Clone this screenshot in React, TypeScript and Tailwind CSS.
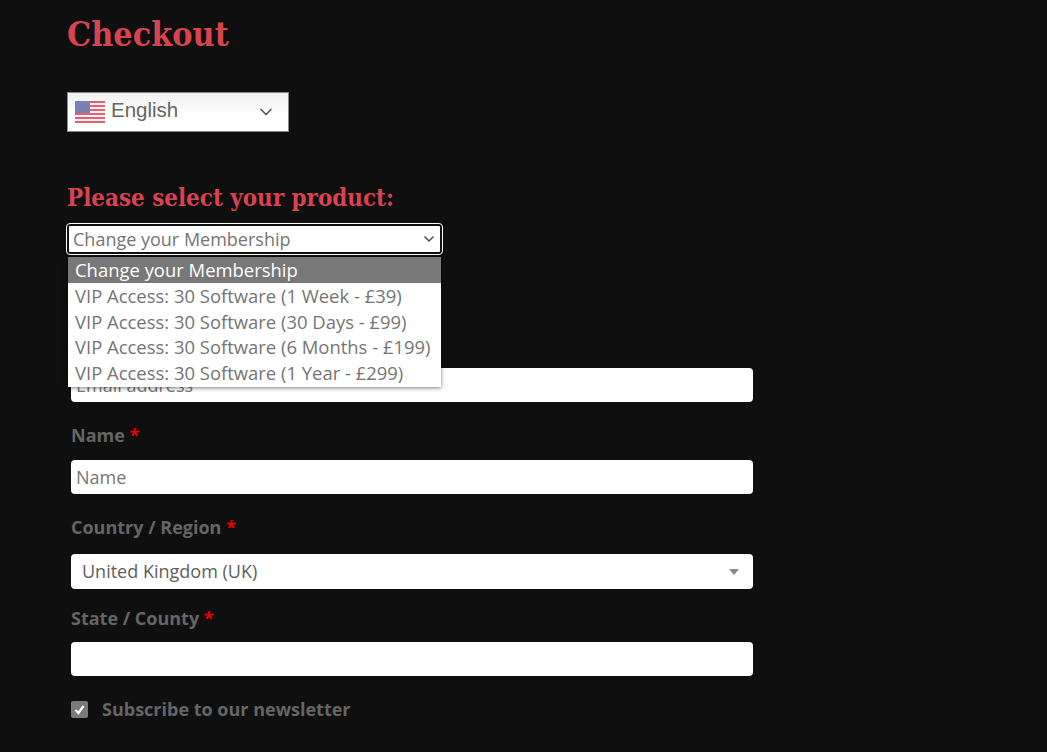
import { ChevronDown } from 'lucide-react';

const products = [
  'VIP Access: 30 Software (1 Week - £39)',
  'VIP Access: 30 Software (30 Days - £99)',
  'VIP Access: 30 Software (6 Months - £199)',
  'VIP Access: 30 Software (1 Year - £299)',
];

function UsFlag() {
  return (
    <svg width="30" height="22" viewBox="0 0 30 22" className="shrink-0 blur-[0.4px]">
      <rect width="30" height="22" fill="#f7f3f4" />
      {[0, 4, 8, 12, 16, 20].map((y) => (
        <rect key={y} y={y} width="30" height="2" fill="#e5616f" />
      ))}
      <rect width="15" height="12" fill="#7a7fb4" />
    </svg>
  );
}

function FieldLabel({ children }: { children: string }) {
  return (
    <label className="block ml-[4px] text-[18px] leading-[26px] font-bold text-[#656565]">
      {children} <span className="text-[#e60000]">*</span>
    </label>
  );
}

export default function App() {
  return (
    <div className="h-[752px] overflow-hidden bg-[#0f0f10] pl-[67px] font-['Open_Sans',sans-serif]">
      <div className="w-[686px] pt-[13px]">
        <h1 className="font-['DejaVu_Serif_Condensed','DejaVu_Serif',serif] text-[33.8px] leading-[42px] font-bold text-[#d9434f]">
          Checkout
        </h1>

        {/* Language switcher */}
        <div className="mt-[37px] flex h-[40px] w-[222px] items-center border border-[#8a8a8a] bg-gradient-to-b from-[#f1f1f1] to-white to-60% pl-[7px] pr-[12px] font-['Liberation_Sans',sans-serif] text-[20.5px] text-[#666666]">
          <UsFlag />
          <span className="ml-[6px] flex-1 leading-none mb-[4px]">English</span>
          <ChevronDown size={20} strokeWidth={2} className="text-[#555555]" />
        </div>

        <h2 className="mt-[50px] font-['DejaVu_Serif_Condensed','DejaVu_Serif',serif] text-[23.9px] leading-[32px] font-bold text-[#d9434f]">
          Please select your product:
        </h2>

        {/* Open native select */}
        <div className="relative mt-[10px] w-[375px]">
          <div className="flex h-[30px] items-center rounded-[3px] border-2 border-[#111] bg-white pl-[4px] pr-[3px] text-[18px] text-[#757575] outline outline-1 outline-white">
            <span className="flex-1 leading-none">Change your Membership</span>
            <ChevronDown size={16} strokeWidth={2.5} className="text-[#555555]" />
          </div>
          <ul className="absolute left-[1px] top-[33px] z-10 w-[373px] bg-white pb-[2px] text-[18.45px] leading-[25.5px] text-[#757575] shadow-[0_1px_4px_rgba(0,0,0,0.5)]">
            <li className="h-[26px] bg-[#787878] pl-[7px] text-white">Change your Membership</li>
            {products.map((p) => (
              <li key={p} className="pl-[7px]">{p}</li>
            ))}
          </ul>
        </div>

        <input
          readOnly
          placeholder="Email address"
          className="mt-[114px] ml-[4px] block h-[34px] w-[682px] rounded-[4px] bg-white px-[5px] text-[18px] placeholder:text-[#777]"
        />

        <div className="mt-[20px]"><FieldLabel>Name</FieldLabel></div>
        <input
          readOnly
          placeholder="Name"
          className="mt-[12px] ml-[4px] block h-[34px] w-[682px] rounded-[4px] bg-white px-[5px] text-[18px] placeholder:text-[#777]"
        />

        <div className="mt-[20px]"><FieldLabel>Country / Region</FieldLabel></div>
        <div className="mt-[14px] ml-[4px] flex h-[35px] w-[682px] items-center rounded-[4px] bg-white pl-[11px] pr-[14px] text-[18px] text-[#5e5e5e]">
          <span className="flex-1">United Kingdom (UK)</span>
          <span className="h-0 w-0 border-x-[5px] border-t-[6px] border-x-transparent border-t-[#888888]" />
        </div>

        <div className="mt-[16px]"><FieldLabel>State / County</FieldLabel></div>
        <input
          readOnly
          className="mt-[11px] ml-[4px] block h-[34px] w-[682px] rounded-[4px] bg-white"
        />

        <div className="mt-[20px] ml-[4px] flex items-center gap-[14px]">
          <span className="flex h-[17px] w-[17px] items-center justify-center rounded-[2px] bg-[#7a7a7a]">
            <svg width="13" height="13" viewBox="0 0 13 13" fill="none">
              <path d="M2.5 7l3 3 5-7" stroke="white" strokeWidth="2.2" />
            </svg>
          </span>
          <span className="text-[18px] leading-[26px] font-bold text-[#656565]">Subscribe to our newsletter</span>
        </div>
      </div>
    </div>
  );
}
